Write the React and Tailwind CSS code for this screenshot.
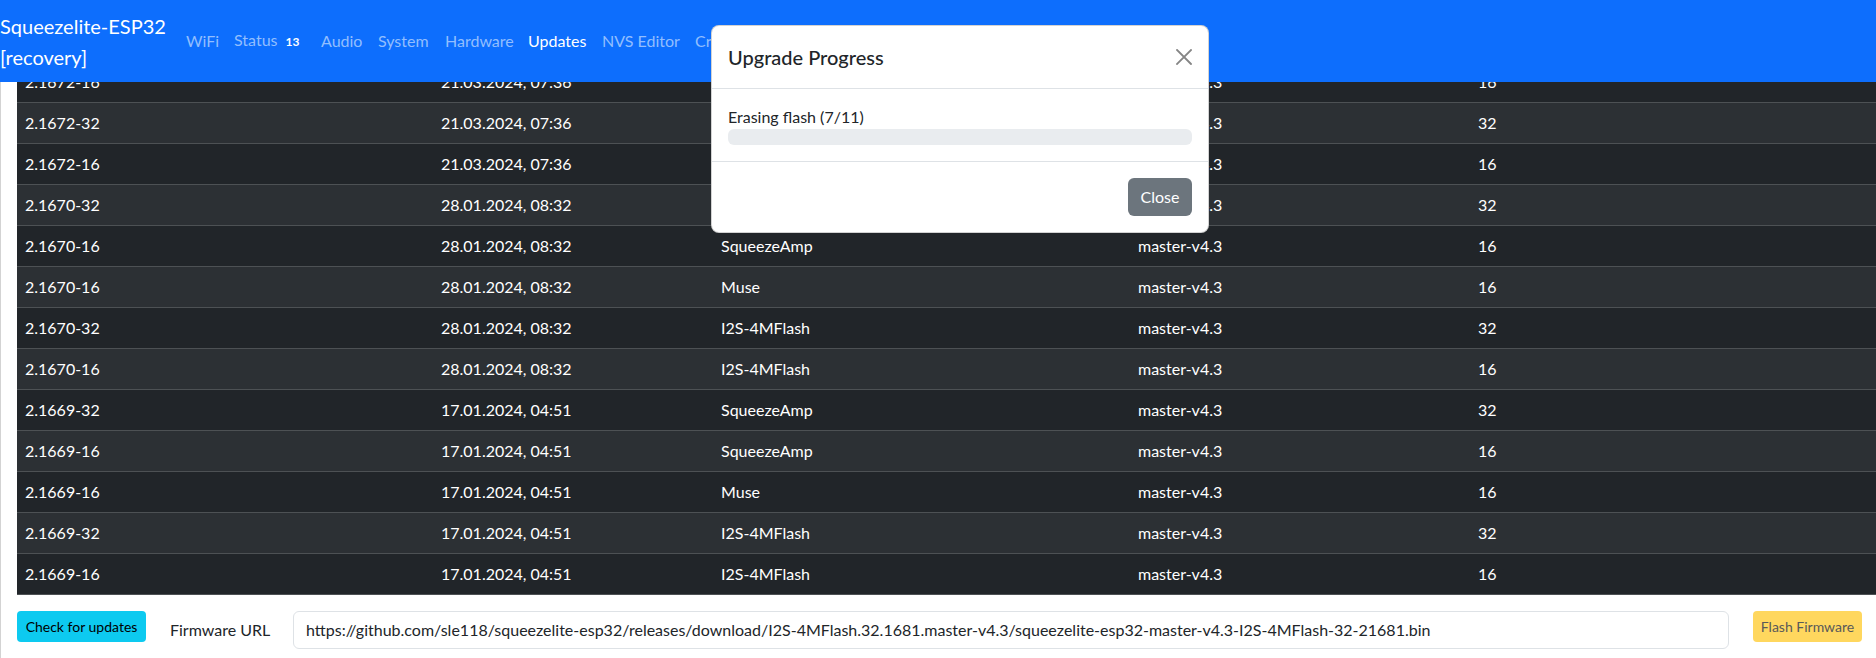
import React from "react";

const rows = [
  ["2.1672-16", "21.03.2024, 07:36", "", "master-v4.3", "16"],
  ["2.1672-32", "21.03.2024, 07:36", "", "master-v4.3", "32"],
  ["2.1672-16", "21.03.2024, 07:36", "", "master-v4.3", "16"],
  ["2.1670-32", "28.01.2024, 08:32", "", "master-v4.3", "32"],
  ["2.1670-16", "28.01.2024, 08:32", "SqueezeAmp", "master-v4.3", "16"],
  ["2.1670-16", "28.01.2024, 08:32", "Muse", "master-v4.3", "16"],
  ["2.1670-32", "28.01.2024, 08:32", "I2S-4MFlash", "master-v4.3", "32"],
  ["2.1670-16", "28.01.2024, 08:32", "I2S-4MFlash", "master-v4.3", "16"],
  ["2.1669-32", "17.01.2024, 04:51", "SqueezeAmp", "master-v4.3", "32"],
  ["2.1669-16", "17.01.2024, 04:51", "SqueezeAmp", "master-v4.3", "16"],
  ["2.1669-16", "17.01.2024, 04:51", "Muse", "master-v4.3", "16"],
  ["2.1669-32", "17.01.2024, 04:51", "I2S-4MFlash", "master-v4.3", "32"],
  ["2.1669-16", "17.01.2024, 04:51", "I2S-4MFlash", "master-v4.3", "16"],
];

const URL =
  "https://github.com/sle118/squeezelite-esp32/releases/download/I2S-4MFlash.32.1681.master-v4.3/squeezelite-esp32-master-v4.3-I2S-4MFlash-32-21681.bin";

function Nav() {
  return (
    <nav className="absolute top-0 left-0 right-0 z-10 h-[82px] bg-[#0d6efd] flex items-center">
      <div className="w-[162px] mr-4 text-white text-[20px] leading-[31px] self-start pt-[11px] whitespace-nowrap">
        <div>Squeezelite-ESP32</div>
        <div>[recovery]</div>
      </div>
      <ul className="flex items-center text-[16px] leading-[24px] text-[#92befe] whitespace-nowrap">
        <li className="w-[48px] px-2">WiFi</li>
        <li className="w-[87px] px-2 flex items-baseline">
          Status<span className="ml-[8px] text-[12px] font-bold text-white">13</span>
        </li>
        <li className="w-[57px] px-2">Audio</li>
        <li className="w-[67px] px-2">System</li>
        <li className="w-[83px] px-2">Hardware</li>
        <li className="w-[74px] px-2 text-white">Updates</li>
        <li className="w-[93px] px-2">NVS Editor</li>
        <li className="px-2">Credits</li>
      </ul>
    </nav>
  );
}

function Modal() {
  return (
    <div className="absolute left-[711px] top-[25px] z-20 w-[498px] bg-white rounded-[8px] border border-black/[.175] text-[#212529]">
      <div className="flex items-center justify-between p-4 border-b border-[#dee2e6]">
        <div className="text-[20px] leading-[30px] font-medium">Upgrade Progress</div>
        <svg width="16" height="16" viewBox="0 0 16 16">
          <path d="M1 1 L15 15 M15 1 L1 15" stroke="#858585" strokeWidth="1.8" strokeLinecap="square" />
        </svg>
      </div>
      <div className="p-4">
        <div className="text-[16px] leading-[24px]">Erasing flash (7/11)</div>
        <div className="h-4 rounded-[6px] bg-[#e9ecef]"></div>
      </div>
      <div className="flex justify-end p-3 border-t border-[#dee2e6]">
        <button className="m-1 h-[38px] w-[64px] rounded-[6px] bg-[#6c757d] text-white text-[16px]">Close</button>
      </div>
    </div>
  );
}

export default function App() {
  return (
    <div
      className="relative h-[658px] w-[1876px] overflow-hidden bg-white"
      style={{ fontFamily: "Lato, 'Open Sans', sans-serif" }}
    >
      <Nav />
      <div className="h-[658px] border-l border-[#d3d3d3] pl-4 pt-[62px]">
        <div className="w-[1859px]">
          {rows.map((r, i) => (
            <div
              key={i}
              className={
                "grid grid-cols-[416px_280px_417px_340px_406px] h-[41px] border-b border-[#4d5154] text-white text-[16px] items-center " +
                (i % 2 ? "bg-[#2c3034]" : "bg-[#212529]")
              }
            >
              {r.map((c, j) => (
                <div key={j} className="px-2 whitespace-nowrap">
                  {c}
                </div>
              ))}
            </div>
          ))}
        </div>
        <div className="flex items-start mt-4 pr-[14px]">
          <button className="h-[31px] w-[129px] rounded-[4px] bg-[#0dcaf0] text-black text-[14px]">
            Check for updates
          </button>
          <div className="ml-6 w-[123px] h-[38px] flex items-center text-[16px] text-[#212529] whitespace-nowrap">
            Firmware URL
          </div>
          <div className="flex-1 h-[38px] border border-[#dee2e6] rounded-[6px] px-3 flex items-center text-[16px] text-[#212529] whitespace-nowrap overflow-hidden">
            {URL}
          </div>
          <button className="ml-6 h-[31px] w-[109px] rounded-[4px] bg-[#ffd75e] text-[#595959] text-[14px]">
            Flash Firmware
          </button>
        </div>
      </div>
      <Modal />
    </div>
  );
}
